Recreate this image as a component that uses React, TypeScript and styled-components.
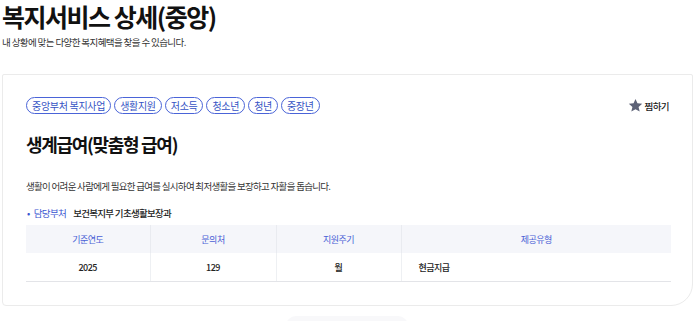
import React from "react";
import styled, { createGlobalStyle } from "styled-components";

const GlobalStyle = createGlobalStyle`
  html, body {
    margin: 0;
    padding: 0;
    background: #ffffff;
    font-family: "Noto Sans CJK KR", "Noto Sans", sans-serif;
    color: #222;
  }
`;

const Page = styled.div`
  width: 700px;
  height: 321px;
  overflow: hidden;
  padding: 1px 8px 0 2px;
  box-sizing: border-box;
`;

const PageTitle = styled.h1`
  margin: 0;
  font-size: 25px;
  font-weight: 700;
  letter-spacing: -1.5px;
  line-height: 31px;
  color: #111;
`;

const PageDesc = styled.p`
  margin: 3px 0 0;
  font-size: 9.5px;
  letter-spacing: -0.6px;
  line-height: 14px;
  color: #333;
`;

const Card = styled.section`
  margin-top: 25px;
  width: 691px;
  height: 232px;
  box-sizing: border-box;
  border: 1px solid #ebebeb;
  border-radius: 2px 2px 22px 4px;
  padding: 22px 22px 0 23px;
`;

const TopRow = styled.div`
  display: flex;
  align-items: center;
  justify-content: space-between;
`;

const TagList = styled.div`
  display: flex;
  gap: 3px;
`;

const Tag = styled.span`
  display: inline-flex;
  align-items: center;
  height: 17px;
  padding: 0 5px;
  box-sizing: border-box;
  border: 1px solid #4a64d8;
  border-radius: 9px;
  font-size: 10px;
  letter-spacing: -0.3px;
  color: #3552c4;
`;

const Bookmark = styled.button`
  display: flex;
  align-items: center;
  gap: 2px;
  border: none;
  background: transparent;
  padding: 0;
  margin-right: 1px;
  font-family: inherit;
  font-size: 9.5px;
  font-weight: 500;
  letter-spacing: -0.6px;
  color: #222;
  cursor: pointer;
`;

const CardTitle = styled.h2`
  margin: 17px 0 0;
  font-size: 18px;
  font-weight: 700;
  letter-spacing: -1.3px;
  line-height: 26px;
  color: #111;
`;

const Summary = styled.p`
  margin: 22px 0 0;
  font-size: 9.5px;
  letter-spacing: -0.7px;
  line-height: 14px;
  color: #333;
`;

const Dept = styled.div`
  display: flex;
  align-items: center;
  margin-top: 13px;
  font-size: 9.5px;
  letter-spacing: -0.6px;
  line-height: 14px;
`;

const DeptLabel = styled.span`
  color: #3a55d0;
  margin-right: 7px;
  &::before {
    content: "•";
    margin: 0 4px 0 1px;
  }
`;

const DeptValue = styled.span`
  color: #222;
  font-weight: 500;
  letter-spacing: -0.7px;
`;

const Table = styled.table`
  margin-top: 5px;
  width: 645px;
  border-collapse: collapse;
  table-layout: fixed;
  font-size: 9px;
  letter-spacing: -0.5px;
`;

const HeadCell = styled.th`
  height: 28px;
  padding: 0;
  background: #f5f6fa;
  color: #4a5fd6;
  font-weight: 400;
  text-align: center;
  border-left: 1px solid #e9ebf0;
  &:first-child {
    border-left: none;
  }
`;

const BodyCell = styled.td<{ $left?: boolean }>`
  height: 28px;
  padding: ${(p) => (p.$left ? "0 0 0 17px" : "0")};
  color: #222;
  font-weight: 500;
  text-align: ${(p) => (p.$left ? "left" : "center")};
  border-left: 1px solid #eef0f3;
  border-bottom: 1px solid #e3e4e8;
  &:first-child {
    border-left: none;
  }
`;

const Footer = styled.div`
  margin: 10px auto 0;
  width: 122px;
  height: 20px;
  border-radius: 10px 10px 0 0;
  background: #f8f8fa;
`;

const tags = ["중앙부처 복지사업", "생활지원", "저소득", "청소년", "청년", "중장년"];

function StarIcon() {
  return (
    <svg width="15" height="15" viewBox="0 0 24 24">
      <path
        d="M12 1.5l3.1 7 7.6.7-5.8 5 1.8 7.5L12 17.8l-6.7 3.9 1.8-7.5-5.8-5 7.6-.7z"
        fill="#5d6277"
      />
    </svg>
  );
}

export default function App() {
  return (
    <Page>
      <GlobalStyle />
      <PageTitle>복지서비스 상세(중앙)</PageTitle>
      <PageDesc>내 상황에 맞는 다양한 복지혜택을 찾을 수 있습니다.</PageDesc>
      <Card>
        <TopRow>
          <TagList>
            {tags.map((t) => (
              <Tag key={t}>{t}</Tag>
            ))}
          </TagList>
          <Bookmark>
            <StarIcon />
            찜하기
          </Bookmark>
        </TopRow>
        <CardTitle>생계급여(맞춤형 급여)</CardTitle>
        <Summary>
          생활이 어려운 사람에게 필요한 급여를 실시하여 최저생활을 보장하고 자활을 돕습니다.
        </Summary>
        <Dept>
          <DeptLabel>담당부처</DeptLabel>
          <DeptValue>보건복지부 기초생활보장과</DeptValue>
        </Dept>
        <Table>
          <colgroup>
            <col style={{ width: 124 }} />
            <col style={{ width: 126 }} />
            <col style={{ width: 125 }} />
            <col />
          </colgroup>
          <thead>
            <tr>
              <HeadCell>기준연도</HeadCell>
              <HeadCell>문의처</HeadCell>
              <HeadCell>지원주기</HeadCell>
              <HeadCell>제공유형</HeadCell>
            </tr>
          </thead>
          <tbody>
            <tr>
              <BodyCell>2025</BodyCell>
              <BodyCell>129</BodyCell>
              <BodyCell>월</BodyCell>
              <BodyCell $left>현금지급</BodyCell>
            </tr>
          </tbody>
        </Table>
      </Card>
      <Footer />
    </Page>
  );
}
